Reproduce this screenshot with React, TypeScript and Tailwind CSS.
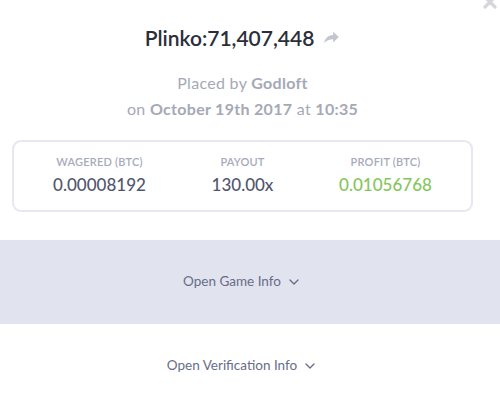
import { ChevronDown } from 'lucide-react';

function ShareIcon() {
  return (
    <svg viewBox="0 0 20 16" className="h-[13px] w-[17px]" fill="#c3c6cf">
      <path d="M12 1 L19 7.5 L12 14 L12 10 C7 10 3.5 11.5 1 15 C2 9.5 5 5.5 12 5 Z" />
    </svg>
  );
}

function Stat({ label, value, green }: { label: string; value: string; green?: boolean }) {
  return (
    <div className="flex flex-col items-center">
      <span className="text-[11px] font-semibold uppercase tracking-[0.2px] text-[#a6aabb]">{label}</span>
      <span className={`mt-[2px] text-[17px] font-medium ${green ? 'text-[#84c65b]' : 'text-[#50566f]'}`}>{value}</span>
    </div>
  );
}

export default function App() {
  return (
    <div className="relative h-[405px] w-[500px] overflow-hidden bg-white" style={{ fontFamily: 'Lato, "Open Sans", sans-serif' }}>
      {/* close button, mostly off the top edge */}
      <svg viewBox="0 0 14 14" className="absolute right-[3px] top-[-5px] h-[14px] w-[14px]" stroke="#d4d6dc" strokeWidth={3.2} strokeLinecap="round">
        <path d="M2 2 L12 12 M12 2 L2 12" />
      </svg>

      <div className="flex w-[485px] flex-col items-center pt-[22px]">
        <div className="flex items-center gap-[9px]">
          <h1 className="text-[21px] font-semibold text-[#2b2e3a]">Plinko:71,407,448</h1>
          <ShareIcon />
        </div>
        <p className="mt-[17px] text-[16px] tracking-[0.3px] text-[#a5a9b6]">
          Placed by <span className="font-bold">Godloft</span>
        </p>
        <p className="mt-[2px] text-[16px] tracking-[0.3px] text-[#a5a9b6]">
          on <span className="font-bold">October 19th 2017</span> at <span className="font-bold">10:35</span>
        </p>
      </div>

      <div className="ml-[12px] mt-[19px] grid h-[72px] w-[461px] grid-cols-3 items-center rounded-[9px] border-2 border-[#e6e8ed] px-[14px]">
        <Stat label="Wagered (BTC)" value="0.00008192" />
        <Stat label="Payout" value="130.00x" />
        <Stat label="Profit (BTC)" value="0.01056768" green />
      </div>

      <div className="mt-[28px] flex h-[84px] w-[500px] items-center bg-[#e1e3ef]">
        <div className="flex w-[485px] items-center justify-center gap-[5px] text-[13.5px] text-[#686d88]">
          Open Game Info <ChevronDown className="h-[16px] w-[16px]" strokeWidth={2} />
        </div>
      </div>

      <div className="flex h-[84px] w-[485px] items-center justify-center gap-[5px] text-[13.5px] text-[#686d88]">
        Open Verification Info <ChevronDown className="h-[16px] w-[16px]" strokeWidth={2} />
      </div>
    </div>
  );
}
